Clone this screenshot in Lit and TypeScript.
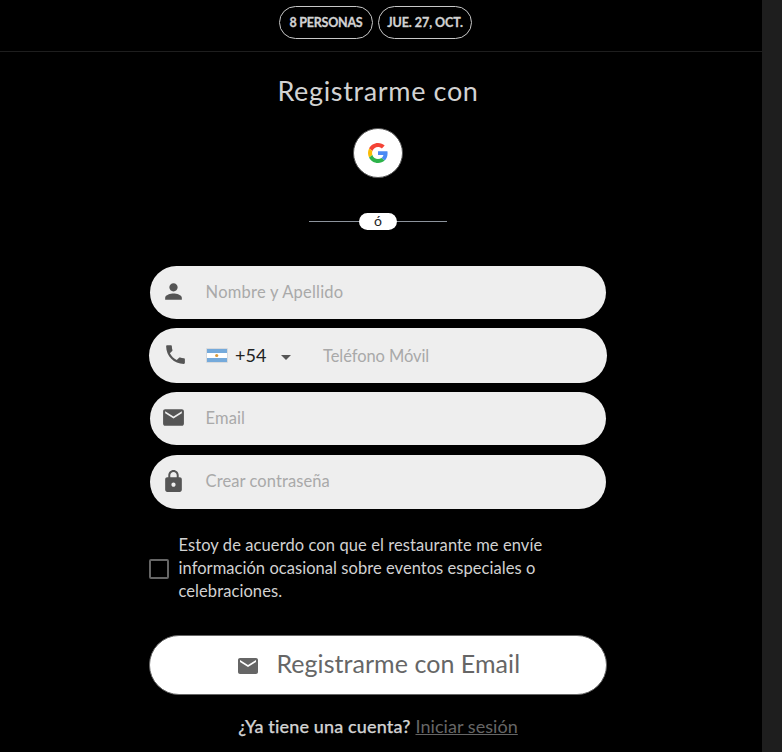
import { LitElement, html, css, svg } from "lit";
import { customElement } from "lit/decorators.js";

const PERSON = "M12 12c2.21 0 4-1.79 4-4s-1.79-4-4-4-4 1.79-4 4 1.79 4 4 4zm0 2c-2.67 0-8 1.34-8 4v2h16v-2c0-2.66-5.33-4-8-4z";
const PHONE = "M6.62 10.79c1.44 2.83 3.76 5.14 6.59 6.59l2.2-2.2c.27-.27.67-.36 1.02-.24 1.12.37 2.33.57 3.57.57.55 0 1 .45 1 1V20c0 .55-.45 1-1 1-9.39 0-17-7.61-17-17 0-.55.45-1 1-1h3.5c.55 0 1 .45 1 1 0 1.25.2 2.45.57 3.57.11.35.03.74-.25 1.02l-2.2 2.2z";
const MAIL = "M20 4H4c-1.1 0-1.99.9-1.99 2L2 18c0 1.1.9 2 2 2h16c1.1 0 2-.9 2-2V6c0-1.1-.9-2-2-2zm0 4l-8 5-8-5V6l8 5 8-5v2z";
const LOCK = "M18 8h-1V6c0-2.76-2.24-5-5-5S7 3.24 7 6v2H6c-1.1 0-2 .9-2 2v10c0 1.1.9 2 2 2h12c1.1 0 2-.9 2-2V10c0-1.1-.9-2-2-2zm-6 9c-1.1 0-2-.9-2-2s.9-2 2-2 2 .9 2 2-.9 2-2 2zm3.1-9H8.9V6c0-1.71 1.39-3.1 3.1-3.1 1.71 0 3.1 1.39 3.1 3.1v2z";

const icon = (d: string) =>
  html`<svg class="icon" viewBox="0 0 24 24">${svg`<path d=${d}></path>`}</svg>`;

@customElement("app-root")
export class AppRoot extends LitElement {
  static styles = css`
    :host {
      display: flex;
      height: 752px;
      overflow: hidden;
      background: #1e1e1e;
      font-family: Lato, "Liberation Sans", sans-serif;
      font-variant-ligatures: none;
      color: #d2d2d2;
    }
    * { box-sizing: border-box; }
    .page { width: 762px; background: #000; }
    header {
      height: 52px;
      padding: 6px 11px 0 0;
      border-bottom: 1px solid #1e1e1e;
      display: flex;
      justify-content: center;
      gap: 5px;
    }
    .chip {
      width: 94px;
      height: 33px;
      border: 1px solid #c8c8c8;
      border-radius: 17px;
      font-size: 12.5px;
      font-weight: 700;
      line-height: 32px;
      text-align: center;
      white-space: nowrap;
      -webkit-text-stroke: 0.3px currentColor;
    }
    .guests { letter-spacing: -0.25px; }
    .date { letter-spacing: -0.05px; }
    main {
      width: 458px;
      margin-left: 149px;
      display: flex;
      flex-direction: column;
      align-items: center;
    }
    h1 {
      margin: 22px 0 0;
      height: 54px;
      line-height: 34px;
      font-size: 27px;
      font-weight: 400;
      letter-spacing: 0.65px;
      white-space: nowrap;
    }
    .google {
      width: 50px;
      height: 50px;
      border: 1px solid #555;
      border-radius: 50%;
      background: #fff;
      display: grid;
      place-items: center;
    }
    .google svg { width: 20px; height: 20px; }
    .or {
      width: 138px;
      height: 17px;
      margin: 35px 0 36px;
      display: flex;
      align-items: center;
    }
    .or::before, .or::after { content: ""; flex: 1; height: 1px; background: #8c939c; }
    .or span {
      width: 38px;
      height: 17px;
      border-radius: 9px;
      background: #fff;
      color: #222;
      font-size: 14px;
      line-height: 16px;
      text-align: center;
    }
    .field {
      width: 456px;
      height: 53px;
      border-radius: 27px;
      background: #eee;
      display: flex;
      align-items: center;
      padding-left: 11px;
      margin-bottom: 9px;
      font-size: 16.5px;
      line-height: 24px;
      color: #a9a9a9;
      white-space: nowrap;
    }
    .field.phone { width: 458px; height: 55px; border-radius: 28px; padding-left: 14px; }
    .field.mail { margin-bottom: 10px; }
    .field.pass { height: 54px; margin-bottom: 0; }
    .icon { width: 24px; height: 24px; fill: #555; display: block; flex: none; }
    .field .icon { width: 25px; height: 25px; margin-top: -2px; }
    .phone .icon { margin-top: -2px; }
    .label { margin: -1px 0 0 19.6px; }
    .pass .label { margin-top: -3px; }
    .name { letter-spacing: 0.23px; }
    .email { letter-spacing: 0.1px; }
    .secret { letter-spacing: 0.08px; }
    .flag { width: 22px; height: 15px; margin-left: 18px; }
    .code { color: #222; font-size: 18px; margin: -2px 0 0 7px; width: 32px; }
    .caret {
      margin: 4px 0 0 14px;
      border: 5px solid transparent;
      border-top-color: #555;
      border-bottom: 0;
    }
    .number { margin: 1px 0 0 32px; letter-spacing: -0.07px; }
    .consent {
      align-self: stretch;
      display: flex;
      align-items: center;
      margin-top: 25px;
      font-size: 16.5px;
      line-height: 23px;
      white-space: nowrap;
    }
    .box {
      width: 20px;
      height: 20px;
      margin: 1px 9.5px 0 0;
      border: 2px solid #666;
      border-radius: 2px;
    }
    .l1 { letter-spacing: 0.09px; }
    .l2 { letter-spacing: 0.05px; }
    .l3 { letter-spacing: 0.08px; }
    .submit {
      width: 458px;
      height: 60px;
      margin-top: 32px;
      border: 1px solid #666;
      border-radius: 30px;
      background: #fff;
      color: #666;
      display: flex;
      align-items: center;
      padding-left: 86px;
      font-size: 25px;
      white-space: nowrap;
    }
    .submit .icon { fill: #666; margin-top: 2px; }
    .submit span { margin: -4px 0 0 16.4px; letter-spacing: 0.05px; }
    footer {
      margin-top: 19px;
      display: flex;
      gap: 5px;
      font-size: 18px;
      line-height: 24px;
      white-space: nowrap;
    }
    footer b {
      font-weight: 500;
      letter-spacing: 0.15px;
      -webkit-text-stroke: 0.25px currentColor;
    }
    footer a { color: #666; text-decoration: underline; letter-spacing: 0.05px; }
  `;

  render() {
    return html`
      <div class="page">
        <header>
          <div class="chip"><span class="guests">8 PERSONAS</span></div>
          <div class="chip"><span class="date">JUE. 27, OCT.</span></div>
        </header>
        <main>
          <h1>Registrarme con</h1>
          <div class="google">
            <svg viewBox="0 0 48 48">
              <path fill="#F44336" d="M24 9.5c3.54 0 6.71 1.22 9.21 3.6l6.85-6.85C35.9 2.38 30.47 0 24 0 14.62 0 6.51 5.38 2.56 13.22l7.98 6.19C12.43 13.72 17.74 9.5 24 9.5z"></path>
              <path fill="#4A8AF4" d="M46.98 24.55c0-1.57-.15-3.09-.38-4.55H24v9.02h12.94c-.58 2.96-2.26 5.48-4.78 7.18l7.73 6c4.51-4.18 7.09-10.36 7.09-17.65z"></path>
              <path fill="#FBBC05" d="M10.53 28.59c-.48-1.45-.76-2.99-.76-4.59s.27-3.14.76-4.59l-7.98-6.19C.92 16.46 0 20.12 0 24c0 3.88.92 7.54 2.56 10.78l7.97-6.19z"></path>
              <path fill="#2DB34A" d="M24 48c6.48 0 11.93-2.13 15.89-5.81l-7.73-6c-2.15 1.45-4.92 2.3-8.16 2.3-6.26 0-11.57-4.22-13.47-9.91l-7.98 6.19C6.51 42.62 14.62 48 24 48z"></path>
            </svg>
          </div>
          <div class="or"><span>ó</span></div>
          <div class="field">${icon(PERSON)}<span class="label name">Nombre y Apellido</span></div>
          <div class="field phone">
            ${icon(PHONE)}
            <svg class="flag" viewBox="0 0 22 15">
              <rect width="22" height="15" rx="1" fill="#d8dadd"></rect>
              <rect x="1" y="1" width="20" height="13" fill="#fff"></rect>
              <rect x="1" y="1" width="20" height="4" fill="#75aadb"></rect>
              <rect x="1" y="10" width="20" height="4" fill="#75aadb"></rect>
              <circle cx="10.7" cy="7.5" r="1.6" fill="#d99a3a"></circle>
            </svg>
            <span class="code">+54</span><span class="caret"></span>
            <span class="number">Teléfono Móvil</span>
          </div>
          <div class="field mail">${icon(MAIL)}<span class="label email">Email</span></div>
          <div class="field pass">${icon(LOCK)}<span class="label secret">Crear contraseña</span></div>
          <div class="consent">
            <span class="box"></span>
            <div>
              <div class="l1">Estoy de acuerdo con que el restaurante me envíe</div>
              <div class="l2">información ocasional sobre eventos especiales o</div>
              <div class="l3">celebraciones.</div>
            </div>
          </div>
          <div class="submit">${icon(MAIL)}<span>Registrarme con Email</span></div>
          <footer><b>¿Ya tiene una cuenta?</b><a>Iniciar sesión</a></footer>
        </main>
      </div>
    `;
  }
}
